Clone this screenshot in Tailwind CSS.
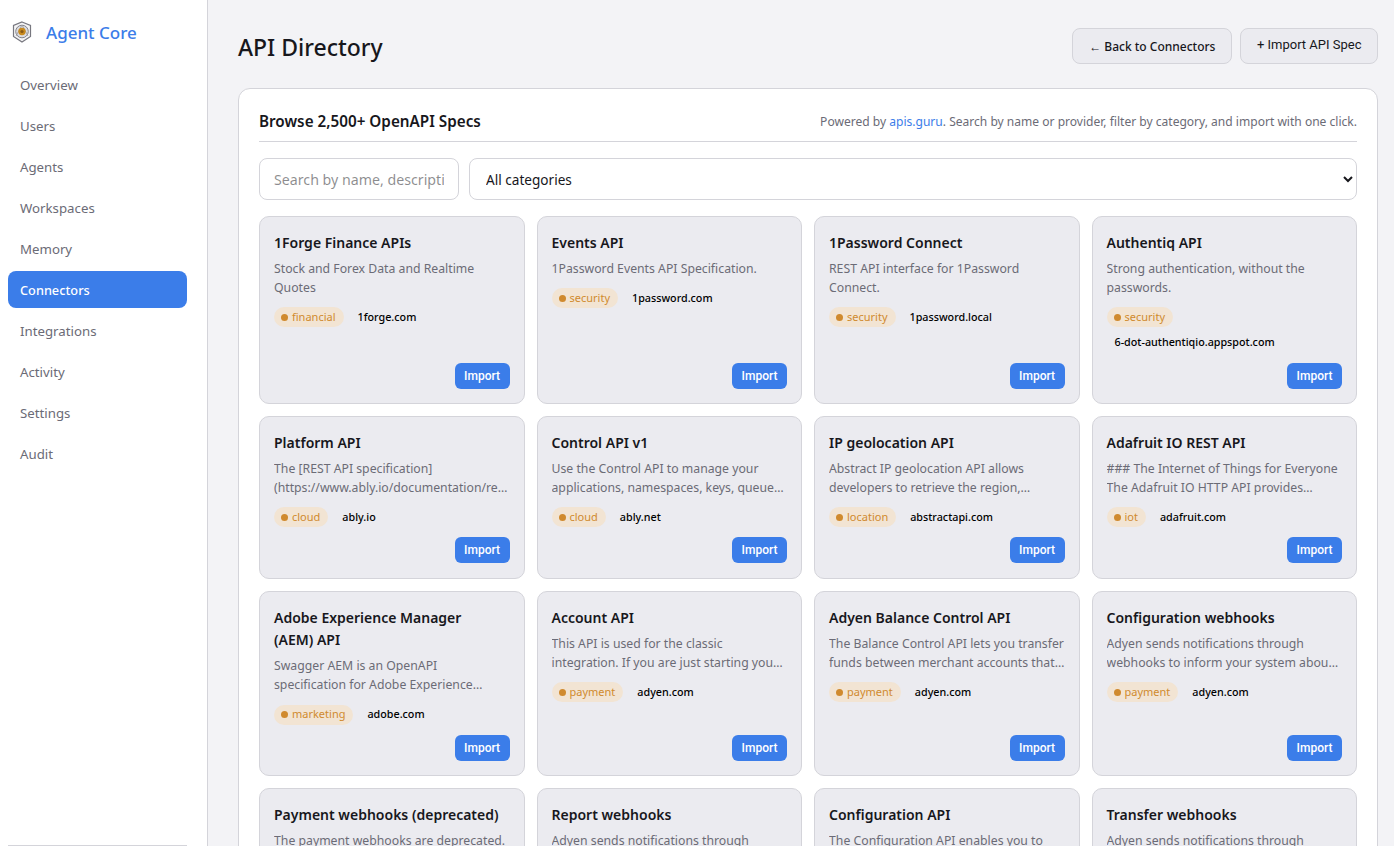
<!doctype html>
<html><head><meta charset="utf-8"><script src="https://cdn.jsdelivr.net/npm/@tailwindcss/browser@4"></script></head>
<body class="m-0 h-[846px] overflow-hidden bg-[#f3f3f6] font-['Noto_Sans',sans-serif] text-[#17171c]">
<div class="flex h-[846px]">
<aside class="w-[208px] shrink-0 h-full bg-white border-r border-[#d4d4da] pl-2 pr-5 relative">
  <div class="flex items-center gap-[14px] h-[66px] pb-[2px] pl-[4px]">
    <svg width="20" height="22" viewBox="0 0 20 22" fill="none"><path d="M10 1 18.500 4.500V15.500L10 21 1.500 15.500V4.500Z" fill="#f4f4f6" stroke="#77777f" stroke-width="1.200"/><circle cx="10" cy="10.500" r="6.300" fill="#dcdce0" stroke="#85858c"/><path d="M4 15 10 4 16 15" stroke="#9a9aa0" stroke-width=".8"/><circle cx="10" cy="10.500" r="3.700" fill="#c98a1e"/><circle cx="10" cy="10.500" r="1.600" fill="#8a5a14"/></svg>
    <span class="text-[17px] font-medium text-[#3b7de9] pt-[2px]">Agent Core</span>
  </div>
  <nav class="flex flex-col gap-[4px] text-[13.25px] text-[#6b6b76]">
    <a class="h-[37px] pt-[2px] flex items-center px-3 rounded-lg">Overview</a>
    <a class="h-[37px] pt-[2px] flex items-center px-3 rounded-lg">Users</a>
    <a class="h-[37px] pt-[2px] flex items-center px-3 rounded-lg">Agents</a>
    <a class="h-[37px] pt-[2px] flex items-center px-3 rounded-lg">Workspaces</a>
    <a class="h-[37px] pt-[2px] flex items-center px-3 rounded-lg">Memory</a>
    <a class="h-[37px] pt-[2px] flex items-center px-3 rounded-lg bg-[#3b7de9] text-white text-[12.75px] font-medium">Connectors</a>
    <a class="h-[37px] pt-[2px] flex items-center px-3 rounded-lg">Integrations</a>
    <a class="h-[37px] pt-[2px] flex items-center px-3 rounded-lg">Activity</a>
    <a class="h-[37px] pt-[2px] flex items-center px-3 rounded-lg">Settings</a>
    <a class="h-[37px] pt-[2px] flex items-center px-3 rounded-lg">Audit</a>
  </nav>
  <div class="absolute left-2 right-[20px] bottom-0 h-px bg-[#d4d4da]"></div>
</aside>
<main class="flex-1 min-w-0 pl-[30px] pr-4 pt-[28px]">
  <div class="flex items-center justify-between h-[36px] mb-[24px]">
    <h1 class="text-[23px] font-medium leading-[42px] pt-[1px]">API Directory</h1>
    <div class="flex gap-2">
      <button class="h-[36px] px-4 pt-[2px] rounded-lg bg-[#ebebf0] border border-[#d4d4da] text-[12px] font-medium">← Back to Connectors</button>
      <button class="h-[36px] px-[15.5px] pb-[2px] rounded-lg bg-[#ebebf0] border border-[#d4d4da] text-[13px] font-['Roboto',sans-serif]">+ Import API Spec</button>
    </div>
  </div>
  <section class="bg-white border border-[#d4d4da] rounded-xl px-5 pt-5 h-[800px]">
    <div class="flex items-center justify-between pb-[8px] border-b border-[#d4d4da] h-[33px] mb-4">
      <h2 class="text-[15.25px] font-semibold">Browse 2,500+ OpenAPI Specs</h2>
      <p class="text-[12.05px] pt-[3px] text-[#6b6b76]">Powered by <a class="text-[#3b7de9]">apis.guru</a>. Search by name or provider, filter by category, and import with one click.</p>
    </div>
    <div class="flex gap-[10px] mb-4">
      <input class="w-[200px] h-[42px] px-[14px] rounded-lg border border-[#d4d4da] text-[14.2px] bg-white" placeholder="Search by name, description, or provider">
      <select class="flex-1 h-[42px] px-3 pt-[1px] rounded-lg border border-[#d4d4da] text-[13.6px] bg-white"><option>All categories</option></select>
    </div>
    <div class="grid grid-cols-4 gap-3">
      <div class="flex flex-col bg-[#ebebf0] border border-[#d4d4da] rounded-[10px] p-[14px] pb-[14.35px]">
        <h3 class="text-[14px] font-semibold leading-[22.4px] pt-[1.1px]">1Forge Finance APIs</h3>
        <p class="mt-[4.4px] text-[12.25px] leading-[19px] text-[#6b6b76] line-clamp-2 break-words">Stock and Forex Data and Realtime Quotes</p>
        <div class="mt-[10.5px] flex flex-wrap items-center gap-[6px]"><span class="inline-flex items-center gap-[4px] h-5 pl-[7px] pr-2 rounded-full bg-[#f2e4d3] text-[11px] text-[#d08a2e]"><i class="size-[7px] rounded-full bg-[#d08a2e]"></i>financial</span><span class="px-2 py-[2px] text-[10.75px] leading-[15px] font-medium text-black">1forge.com</span></div>
        <div class="mt-auto pt-[10.15px] flex justify-end"><button class="h-[26px] px-[9.5px] rounded-md bg-[#3b7de9] text-white text-[12px] font-medium font-['Roboto',sans-serif]">Import</button></div>
      </div>
      <div class="flex flex-col bg-[#ebebf0] border border-[#d4d4da] rounded-[10px] p-[14px] pb-[14.35px]">
        <h3 class="text-[14px] font-semibold leading-[22.4px] pt-[1.1px]">Events API</h3>
        <p class="mt-[4.4px] text-[12.25px] leading-[19px] text-[#6b6b76] line-clamp-2 break-words">1Password Events API Specification.</p>
        <div class="mt-[10.5px] flex flex-wrap items-center gap-[6px]"><span class="inline-flex items-center gap-[4px] h-5 pl-[7px] pr-2 rounded-full bg-[#f2e4d3] text-[11px] text-[#d08a2e]"><i class="size-[7px] rounded-full bg-[#d08a2e]"></i>security</span><span class="px-2 py-[2px] text-[10.75px] leading-[15px] font-medium text-black">1password.com</span></div>
        <div class="mt-auto pt-[10.15px] flex justify-end"><button class="h-[26px] px-[9.5px] rounded-md bg-[#3b7de9] text-white text-[12px] font-medium font-['Roboto',sans-serif]">Import</button></div>
      </div>
      <div class="flex flex-col bg-[#ebebf0] border border-[#d4d4da] rounded-[10px] p-[14px] pb-[14.35px]">
        <h3 class="text-[14px] font-semibold leading-[22.4px] pt-[1.1px]">1Password Connect</h3>
        <p class="mt-[4.4px] text-[12.25px] leading-[19px] text-[#6b6b76] line-clamp-2 break-words">REST API interface for 1Password Connect.</p>
        <div class="mt-[10.5px] flex flex-wrap items-center gap-[6px]"><span class="inline-flex items-center gap-[4px] h-5 pl-[7px] pr-2 rounded-full bg-[#f2e4d3] text-[11px] text-[#d08a2e]"><i class="size-[7px] rounded-full bg-[#d08a2e]"></i>security</span><span class="px-2 py-[2px] text-[10.75px] leading-[15px] font-medium text-black">1password.local</span></div>
        <div class="mt-auto pt-[10.15px] flex justify-end"><button class="h-[26px] px-[9.5px] rounded-md bg-[#3b7de9] text-white text-[12px] font-medium font-['Roboto',sans-serif]">Import</button></div>
      </div>
      <div class="flex flex-col bg-[#ebebf0] border border-[#d4d4da] rounded-[10px] p-[14px] pb-[14.35px]">
        <h3 class="text-[14px] font-semibold leading-[22.4px] pt-[1.1px]">Authentiq API</h3>
        <p class="mt-[4.4px] text-[12.25px] leading-[19px] text-[#6b6b76] line-clamp-2 break-words">Strong authentication, without the passwords.</p>
        <div class="mt-[10.5px] flex flex-wrap items-center gap-[6px]"><span class="inline-flex items-center gap-[4px] h-5 pl-[7px] pr-2 rounded-full bg-[#f2e4d3] text-[11px] text-[#d08a2e]"><i class="size-[7px] rounded-full bg-[#d08a2e]"></i>security</span><span class="px-2 py-[2px] text-[10.75px] leading-[15px] font-medium text-black">6-dot-authentiqio.appspot.com</span></div>
        <div class="mt-auto pt-[10.15px] flex justify-end"><button class="h-[26px] px-[9.5px] rounded-md bg-[#3b7de9] text-white text-[12px] font-medium font-['Roboto',sans-serif]">Import</button></div>
      </div>

      <div class="flex flex-col bg-[#ebebf0] border border-[#d4d4da] rounded-[10px] p-[14px] pb-[14.35px]">
        <h3 class="text-[14px] font-semibold leading-[22.4px] pt-[1.1px]">Platform API</h3>
        <p class="mt-[4.4px] text-[12.25px] leading-[19px] text-[#6b6b76] line-clamp-2 break-words">The [REST API specification](https://www.ably.io/documentation/rest-api) for Ably.</p>
        <div class="mt-[10.5px] flex flex-wrap items-center gap-[6px]"><span class="inline-flex items-center gap-[4px] h-5 pl-[7px] pr-2 rounded-full bg-[#f2e4d3] text-[11px] text-[#d08a2e]"><i class="size-[7px] rounded-full bg-[#d08a2e]"></i>cloud</span><span class="px-2 py-[2px] text-[10.75px] leading-[15px] font-medium text-black">ably.io</span></div>
        <div class="mt-auto pt-[10.15px] flex justify-end"><button class="h-[26px] px-[9.5px] rounded-md bg-[#3b7de9] text-white text-[12px] font-medium font-['Roboto',sans-serif]">Import</button></div>
      </div>
      <div class="flex flex-col bg-[#ebebf0] border border-[#d4d4da] rounded-[10px] p-[14px] pb-[14.35px]">
        <h3 class="text-[14px] font-semibold leading-[22.4px] pt-[1.1px]">Control API v1</h3>
        <p class="mt-[4.4px] text-[12.25px] leading-[19px] text-[#6b6b76] line-clamp-2 break-words">Use the Control API to manage your applications, namespaces, keys, queues, rules, and more.</p>
        <div class="mt-[10.5px] flex flex-wrap items-center gap-[6px]"><span class="inline-flex items-center gap-[4px] h-5 pl-[7px] pr-2 rounded-full bg-[#f2e4d3] text-[11px] text-[#d08a2e]"><i class="size-[7px] rounded-full bg-[#d08a2e]"></i>cloud</span><span class="px-2 py-[2px] text-[10.75px] leading-[15px] font-medium text-black">ably.net</span></div>
        <div class="mt-auto pt-[10.15px] flex justify-end"><button class="h-[26px] px-[9.5px] rounded-md bg-[#3b7de9] text-white text-[12px] font-medium font-['Roboto',sans-serif]">Import</button></div>
      </div>
      <div class="flex flex-col bg-[#ebebf0] border border-[#d4d4da] rounded-[10px] p-[14px] pb-[14.35px]">
        <h3 class="text-[14px] font-semibold leading-[22.4px] pt-[1.1px]">IP geolocation API</h3>
        <p class="mt-[4.4px] text-[12.25px] leading-[19px] text-[#6b6b76] line-clamp-2 break-words">Abstract IP geolocation API allows developers to retrieve the region, country and city behind any IP.</p>
        <div class="mt-[10.5px] flex flex-wrap items-center gap-[6px]"><span class="inline-flex items-center gap-[4px] h-5 pl-[7px] pr-2 rounded-full bg-[#f2e4d3] text-[11px] text-[#d08a2e]"><i class="size-[7px] rounded-full bg-[#d08a2e]"></i>location</span><span class="px-2 py-[2px] text-[10.75px] leading-[15px] font-medium text-black">abstractapi.com</span></div>
        <div class="mt-auto pt-[10.15px] flex justify-end"><button class="h-[26px] px-[9.5px] rounded-md bg-[#3b7de9] text-white text-[12px] font-medium font-['Roboto',sans-serif]">Import</button></div>
      </div>
      <div class="flex flex-col bg-[#ebebf0] border border-[#d4d4da] rounded-[10px] p-[14px] pb-[14.35px]">
        <h3 class="text-[14px] font-semibold leading-[22.4px] pt-[1.1px]">Adafruit IO REST API</h3>
        <p class="mt-[4.4px] text-[12.25px] leading-[19px] text-[#6b6b76] line-clamp-2 break-words">### The Internet of Things for Everyone The Adafruit IO HTTP API provides access to your data.</p>
        <div class="mt-[10.5px] flex flex-wrap items-center gap-[6px]"><span class="inline-flex items-center gap-[4px] h-5 pl-[7px] pr-2 rounded-full bg-[#f2e4d3] text-[11px] text-[#d08a2e]"><i class="size-[7px] rounded-full bg-[#d08a2e]"></i>iot</span><span class="px-2 py-[2px] text-[10.75px] leading-[15px] font-medium text-black">adafruit.com</span></div>
        <div class="mt-auto pt-[10.15px] flex justify-end"><button class="h-[26px] px-[9.5px] rounded-md bg-[#3b7de9] text-white text-[12px] font-medium font-['Roboto',sans-serif]">Import</button></div>
      </div>

      <div class="flex flex-col bg-[#ebebf0] border border-[#d4d4da] rounded-[10px] p-[14px] pb-[14.35px]">
        <h3 class="text-[14px] font-semibold leading-[22.4px] pt-[1.1px]">Adobe Experience Manager<br>(AEM) API</h3>
        <p class="mt-[4.4px] text-[12.25px] leading-[19px] text-[#6b6b76] line-clamp-2 break-words">Swagger AEM is an OpenAPI specification for Adobe Experience Manager (AEM) API</p>
        <div class="mt-[10.5px] flex flex-wrap items-center gap-[6px]"><span class="inline-flex items-center gap-[4px] h-5 pl-[7px] pr-2 rounded-full bg-[#f2e4d3] text-[11px] text-[#d08a2e]"><i class="size-[7px] rounded-full bg-[#d08a2e]"></i>marketing</span><span class="px-2 py-[2px] text-[10.75px] leading-[15px] font-medium text-black">adobe.com</span></div>
        <div class="mt-auto pt-[10.15px] flex justify-end"><button class="h-[26px] px-[9.5px] rounded-md bg-[#3b7de9] text-white text-[12px] font-medium font-['Roboto',sans-serif]">Import</button></div>
      </div>
      <div class="flex flex-col bg-[#ebebf0] border border-[#d4d4da] rounded-[10px] p-[14px] pb-[14.35px]">
        <h3 class="text-[14px] font-semibold leading-[22.4px] pt-[1.1px]">Account API</h3>
        <p class="mt-[4.4px] text-[12.25px] leading-[19px] text-[#6b6b76] line-clamp-2 break-words">This API is used for the classic integration. If you are just starting your implementation, refer to our new.</p>
        <div class="mt-[10.5px] flex flex-wrap items-center gap-[6px]"><span class="inline-flex items-center gap-[4px] h-5 pl-[7px] pr-2 rounded-full bg-[#f2e4d3] text-[11px] text-[#d08a2e]"><i class="size-[7px] rounded-full bg-[#d08a2e]"></i>payment</span><span class="px-2 py-[2px] text-[10.75px] leading-[15px] font-medium text-black">adyen.com</span></div>
        <div class="mt-auto pt-[10.15px] flex justify-end"><button class="h-[26px] px-[9.5px] rounded-md bg-[#3b7de9] text-white text-[12px] font-medium font-['Roboto',sans-serif]">Import</button></div>
      </div>
      <div class="flex flex-col bg-[#ebebf0] border border-[#d4d4da] rounded-[10px] p-[14px] pb-[14.35px]">
        <h3 class="text-[14px] font-semibold leading-[22.4px] pt-[1.1px]">Adyen Balance Control API</h3>
        <p class="mt-[4.4px] text-[12.25px] leading-[19px] text-[#6b6b76] line-clamp-2 break-words">The Balance Control API lets you transfer funds between merchant accounts that belong to the same legal entity.</p>
        <div class="mt-[10.5px] flex flex-wrap items-center gap-[6px]"><span class="inline-flex items-center gap-[4px] h-5 pl-[7px] pr-2 rounded-full bg-[#f2e4d3] text-[11px] text-[#d08a2e]"><i class="size-[7px] rounded-full bg-[#d08a2e]"></i>payment</span><span class="px-2 py-[2px] text-[10.75px] leading-[15px] font-medium text-black">adyen.com</span></div>
        <div class="mt-auto pt-[10.15px] flex justify-end"><button class="h-[26px] px-[9.5px] rounded-md bg-[#3b7de9] text-white text-[12px] font-medium font-['Roboto',sans-serif]">Import</button></div>
      </div>
      <div class="flex flex-col bg-[#ebebf0] border border-[#d4d4da] rounded-[10px] p-[14px] pb-[14.35px]">
        <h3 class="text-[14px] font-semibold leading-[22.4px] pt-[1.1px]">Configuration webhooks</h3>
        <p class="mt-[4.4px] text-[12.25px] leading-[19px] text-[#6b6b76] line-clamp-2 break-words">Adyen sends notifications through webhooks to inform your system about events that occur in your account.</p>
        <div class="mt-[10.5px] flex flex-wrap items-center gap-[6px]"><span class="inline-flex items-center gap-[4px] h-5 pl-[7px] pr-2 rounded-full bg-[#f2e4d3] text-[11px] text-[#d08a2e]"><i class="size-[7px] rounded-full bg-[#d08a2e]"></i>payment</span><span class="px-2 py-[2px] text-[10.75px] leading-[15px] font-medium text-black">adyen.com</span></div>
        <div class="mt-auto pt-[10.15px] flex justify-end"><button class="h-[26px] px-[9.5px] rounded-md bg-[#3b7de9] text-white text-[12px] font-medium font-['Roboto',sans-serif]">Import</button></div>
      </div>

      <div class="flex flex-col bg-[#ebebf0] border border-[#d4d4da] rounded-[10px] p-[14px] pb-[14.35px]">
        <h3 class="text-[14px] font-semibold leading-[22.4px] pt-[1.1px]">Payment webhooks (deprecated)</h3>
        <p class="mt-[4.4px] text-[12.25px] leading-[19px] text-[#6b6b76] line-clamp-2 break-words">The payment webhooks are deprecated.</p>
      </div>
      <div class="flex flex-col bg-[#ebebf0] border border-[#d4d4da] rounded-[10px] p-[14px] pb-[14.35px]">
        <h3 class="text-[14px] font-semibold leading-[22.4px] pt-[1.1px]">Report webhooks</h3>
        <p class="mt-[4.4px] text-[12.25px] leading-[19px] text-[#6b6b76] line-clamp-2 break-words">Adyen sends notifications through</p>
      </div>
      <div class="flex flex-col bg-[#ebebf0] border border-[#d4d4da] rounded-[10px] p-[14px] pb-[14.35px]">
        <h3 class="text-[14px] font-semibold leading-[22.4px] pt-[1.1px]">Configuration API</h3>
        <p class="mt-[4.4px] text-[12.25px] leading-[19px] text-[#6b6b76] line-clamp-2 break-words">The Configuration API enables you to</p>
      </div>
      <div class="flex flex-col bg-[#ebebf0] border border-[#d4d4da] rounded-[10px] p-[14px] pb-[14.35px]">
        <h3 class="text-[14px] font-semibold leading-[22.4px] pt-[1.1px]">Transfer webhooks</h3>
        <p class="mt-[4.4px] text-[12.25px] leading-[19px] text-[#6b6b76] line-clamp-2 break-words">Adyen sends notifications through</p>
      </div>
    </div>
  </section>
</main>
</div>
</body></html>
